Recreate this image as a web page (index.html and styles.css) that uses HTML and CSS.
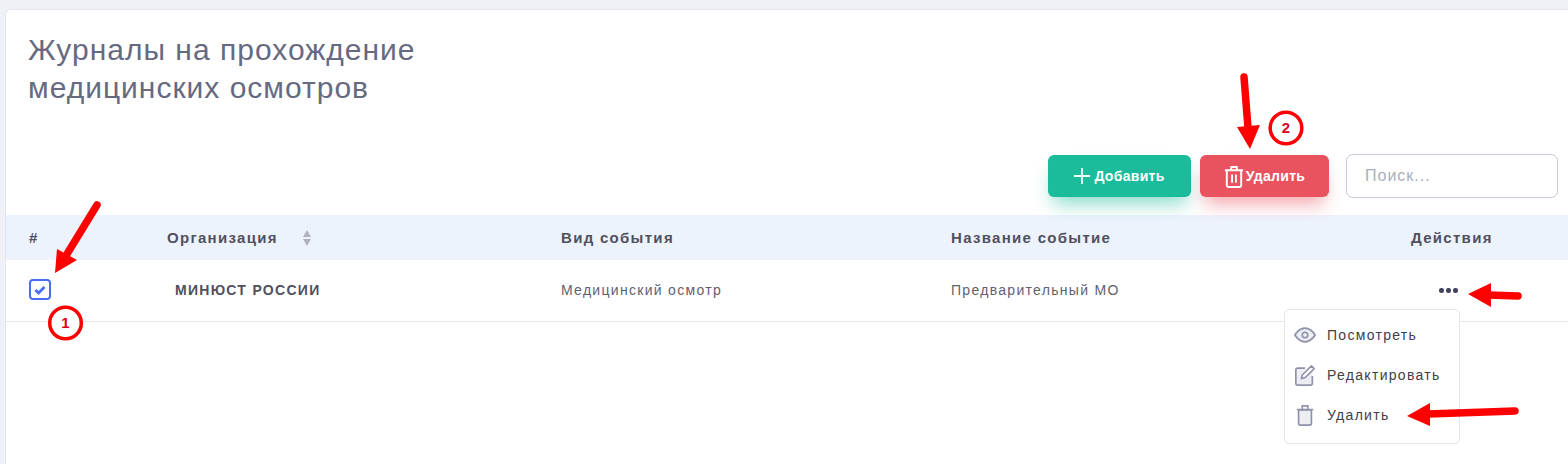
FILE: index.html
```html
<!DOCTYPE html>
<html lang="en">
<head>
  <meta charset="UTF-8">
  <title>Журналы на прохождение медицинских осмотров</title>
  <link rel="stylesheet" href="styles.css">
</head>
<body>
  <div class="card">
    <h1 class="page-title">Журналы на прохождение<br>медицинских осмотров</h1>
    <div class="toolbar">
      <button class="btn btn-add">
        <svg class="btn-icon" viewBox="0 0 18 18"><path d="M9 0v18M0 9h18" fill="none" stroke="#fff" stroke-width="2"/></svg>
        Добавить
      </button>
      <button class="btn btn-delete">
        <svg class="btn-icon-trash" viewBox="0 0 20 24" fill="none" stroke="#fff" stroke-width="2" stroke-linejoin="round"><path d="M0.500 5.500h19M7 5V2h6v3M2.500 6v15.500a1.500 1.500 0 0 0 1.500 1.500h12a1.500 1.500 0 0 0 1.500-1.500V6M8 10v8.500M12 10v8.500"/></svg>
        Удалить
      </button>
      <input class="search" type="text" placeholder="Поиск...">
    </div>
    <div class="table-row table-head">
      <div>#</div>
      <div class="sortable">Организация
        <svg class="sort-icon" viewBox="0 0 10 16"><path d="M5 0l4 7H1zM5 16l4-7H1z" fill="#b0b3bd"/></svg>
      </div>
      <div>Вид события</div>
      <div>Название событие</div>
      <div>Действия</div>
    </div>
    <div class="table-row table-body">
      <div>
        <span class="checkbox">
          <svg viewBox="0 0 12 10"><path d="M1.500 5l3 3 6-6" fill="none" stroke="#4a6cf0" stroke-width="2.800"/></svg>
        </span>
      </div>
      <div class="org-name">МИНЮСТ РОССИИ</div>
      <div>Медицинский осмотр</div>
      <div>Предварительный МО</div>
      <div class="actions">
        <span class="dots"><i></i><i></i><i></i></span>
        <div class="menu">
          <div class="menu-item">
            <svg class="menu-icon" viewBox="0 0 24 24"><path d="M1 12s4-7.500 11-7.500S23 12 23 12s-4 7.500-11 7.500S1 12 1 12z" fill="#eceef3" stroke="#8e92ab" stroke-width="1.800"/><circle cx="12" cy="12" r="3" fill="none" stroke="#8e92ab" stroke-width="1.800"/></svg>
            Посмотреть
          </div>
          <div class="menu-item">
            <svg class="menu-icon" viewBox="0 0 24 24"><path d="M3 5h9l-3 9v0l5-1 6-6v13a2 2 0 0 1-2 2H3a1 1 0 0 1-1-1V6a1 1 0 0 1 1-1z" fill="#eceef3"/><path d="M12 4.500H4a2 2 0 0 0-2 2V21a2 2 0 0 0 2 2h14a2 2 0 0 0 2-2v-8" fill="none" stroke="#8e92ab" stroke-width="1.800"/><path d="M19 2l3 3-10 10-4 1 1-4z" fill="none" stroke="#8e92ab" stroke-width="1.800" stroke-linejoin="round"/></svg>
            Редактировать
          </div>
          <div class="menu-item">
            <svg class="menu-icon" viewBox="0 0 24 24"><path d="M5 6.500h14V21a2 2 0 0 1-2 2H7a2 2 0 0 1-2-2z" fill="#eceef3" stroke="#8e92ab" stroke-width="1.800"/><path d="M3 6h18M9 5.500V2h6v3.500" fill="none" stroke="#8e92ab" stroke-width="1.800"/></svg>
            Удалить
          </div>
        </div>
      </div>
    </div>
  </div>

  <!-- red annotations drawn over the screenshot -->
  <svg class="notes" viewBox="0 0 1568 464">
    <g fill="#ff0000" stroke="none">
      <path d="M55 273L57 249L77 260Z"/>
      <path d="M1250 149L1237 127L1260 125Z"/>
      <path d="M1468 294L1491 283L1491 307Z"/>
      <path d="M1407 416L1430 403L1430 426Z"/>
    </g>
    <g fill="none" stroke="#ff0000" stroke-width="7.500" stroke-linecap="round">
      <path d="M97 205L67 254"/>
      <path d="M1244 77L1248 128"/>
      <path d="M1488 295L1518 296"/>
      <path d="M1428 414L1515 411"/>
    </g>
    <circle class="note-ring" cx="65.500" cy="323" r="15.800"/>
    <circle class="note-ring" cx="1286" cy="128" r="15.800"/>
    <text class="note-num" x="65.500" y="328">1</text>
    <text class="note-num" x="1286" y="133">2</text>
  </svg>
</body>
</html>
```

FILE: styles.css
```css
:root {
  --text: #50505f;
  --muted: #5f6170;
  --border: #e2e5ec;
}
html, body {
  height: 100%;
  overflow: hidden;
}
body {
  background: #f0f1f6;
  font-family: 'Liberation Sans', Arial, sans-serif;
  margin: 0;
  padding: 9px 0 0 5px;
  box-sizing: border-box;
  color: var(--text);
  position: relative;
}
.card {
  background: #fff;
  border: 1px solid var(--border);
  border-right: none;
  border-bottom: none;
  border-radius: 6px 0 0 0;
  height: 100%;
  box-sizing: border-box;
}
.page-title {
  margin: 0;
  padding: 21px 0 0 22px;
  font-weight: 400;
  font-size: 30px;
  line-height: 38px;
  letter-spacing: 1px;
  color: #666a80;
}
.toolbar {
  display: flex;
  justify-content: flex-end;
  align-items: center;
  margin-top: 47px;
  padding-right: 10px;
  margin-bottom: 17px;
}
.btn {
  display: flex;
  align-items: center;
  justify-content: center;
  height: 42px;
  border: none;
  border-radius: 6px;
  color: #fff;
  font-family: inherit;
  font-size: 14px;
  font-weight: 700;
  letter-spacing: 0.3px;
}
.btn-add {
  width: 143px;
  margin-right: 9px;
  background: #1abc9c;
  box-shadow: 0 12px 18px -5px rgba(26,188,156,0.5);
}
.btn-delete {
  width: 129px;
  margin-right: 17px;
  background: #e9535f;
  box-shadow: 0 12px 18px -5px rgba(233,83,95,0.5);
}
.btn-icon {
  width: 16px;
  height: 16px;
  margin-right: 4px;
}
.btn-icon-trash {
  width: 20px;
  height: 23px;
  margin-right: 2px;
}
.search {
  width: 212px;
  height: 44px;
  padding: 0 18px;
  box-sizing: border-box;
  border: 1px solid #c5cbd8;
  border-radius: 7px;
  background: #fff;
  font-family: inherit;
  font-size: 16px;
  letter-spacing: 1px;
  outline: none;
}
.search::placeholder {
  color: #a9afbb;
}
.table-row {
  display: grid;
  grid-template-columns: 138px 394px 390px 460px 1fr;
  align-items: center;
  padding-left: 23px;
}
.table-head {
  height: 45px;
  background: #edf3fd;
  font-size: 15px;
  font-weight: 700;
  letter-spacing: 1.300px;
}
.sortable {
  display: flex;
  align-items: center;
}
.sort-icon {
  width: 10px;
  height: 16px;
  margin-left: 24px;
}
.table-body {
  border-bottom: 1px solid var(--border);
  box-sizing: border-box;
  height: 62px;
  padding-bottom: 2px;
  font-size: 14px;
  letter-spacing: 1.300px;
  color: var(--muted);
}
.org-name {
  padding-left: 8px;
  font-weight: 700;
  color: var(--text);
}
.checkbox {
  display: flex;
  align-items: center;
  justify-content: center;
  width: 18px;
  height: 17px;
  border: 2px solid #4a6cf0;
  border-radius: 4px;
}
.checkbox svg {
  width: 12px;
  height: 10px;
}
.actions {
  position: relative;
}
.dots {
  display: flex;
  gap: 2.500px;
  margin-top: 2px;
  padding-left: 28px;
}
.dots i {
  width: 4.500px;
  height: 4.500px;
  border-radius: 50%;
  background: #3f4260;
}
.menu {
  position: absolute;
  top: 23px;
  left: -127px;
  width: 176px;
  height: 135px;
  padding: 5px 0;
  box-sizing: border-box;
  background: #fff;
  border: 1px solid var(--border);
  border-radius: 5px;
  color: #3f4048;
  z-index: 2;
}
.menu-item {
  display: flex;
  align-items: center;
  height: 40px;
  padding-left: 9px;
}
.menu-icon {
  width: 22px;
  height: 22px;
  margin-right: 11px;
}
.notes {
  position: absolute;
  top: 0;
  left: 0;
  width: 1568px;
  height: 464px;
  z-index: 3;
}
.note-ring {
  fill: #fff;
  stroke: #ff0000;
  stroke-width: 3.500;
}
.note-num {
  fill: #e0001b;
  font-size: 15px;
  font-weight: 700;
  text-anchor: middle;
}
```
